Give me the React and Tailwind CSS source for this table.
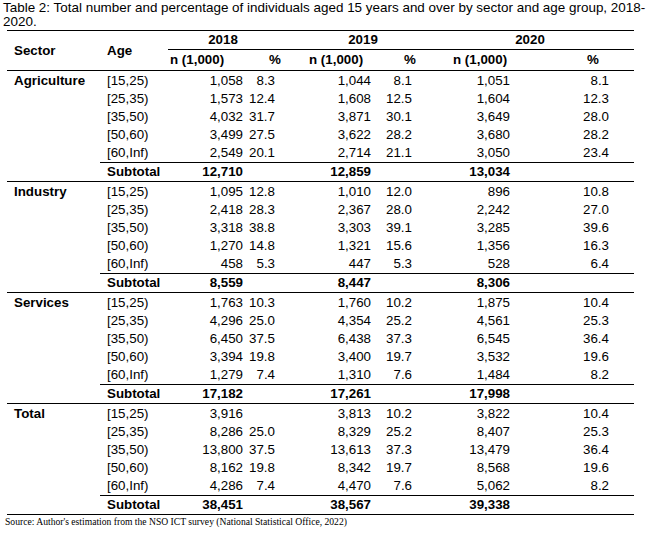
import React from "react";

const sections = [
  {
    name: "Agriculture",
    rows: [
      ["[15,25)", "1,058", "8.3", "1,044", "8.1", "1,051", "8.1"],
      ["[25,35)", "1,573", "12.4", "1,608", "12.5", "1,604", "12.3"],
      ["[35,50)", "4,032", "31.7", "3,871", "30.1", "3,649", "28.0"],
      ["[50,60)", "3,499", "27.5", "3,622", "28.2", "3,680", "28.2"],
      ["[60,Inf)", "2,549", "20.1", "2,714", "21.1", "3,050", "23.4"],
    ],
    sub: ["12,710", "12,859", "13,034"],
  },
  {
    name: "Industry",
    rows: [
      ["[15,25)", "1,095", "12.8", "1,010", "12.0", "896", "10.8"],
      ["[25,35)", "2,418", "28.3", "2,367", "28.0", "2,242", "27.0"],
      ["[35,50)", "3,318", "38.8", "3,303", "39.1", "3,285", "39.6"],
      ["[50,60)", "1,270", "14.8", "1,321", "15.6", "1,356", "16.3"],
      ["[60,Inf)", "458", "5.3", "447", "5.3", "528", "6.4"],
    ],
    sub: ["8,559", "8,447", "8,306"],
  },
  {
    name: "Services",
    rows: [
      ["[15,25)", "1,763", "10.3", "1,760", "10.2", "1,875", "10.4"],
      ["[25,35)", "4,296", "25.0", "4,354", "25.2", "4,561", "25.3"],
      ["[35,50)", "6,450", "37.5", "6,438", "37.3", "6,545", "36.4"],
      ["[50,60)", "3,394", "19.8", "3,400", "19.7", "3,532", "19.6"],
      ["[60,Inf)", "1,279", "7.4", "1,310", "7.6", "1,484", "8.2"],
    ],
    sub: ["17,182", "17,261", "17,998"],
  },
  {
    name: "Total",
    rows: [
      ["[15,25)", "3,916", "", "3,813", "10.2", "3,822", "10.4"],
      ["[25,35)", "8,286", "25.0", "8,329", "25.2", "8,407", "25.3"],
      ["[35,50)", "13,800", "37.5", "13,613", "37.3", "13,479", "36.4"],
      ["[50,60)", "8,162", "19.8", "8,342", "19.7", "8,568", "19.6"],
      ["[60,Inf)", "4,286", "7.4", "4,470", "7.6", "5,062", "8.2"],
    ],
    sub: ["38,451", "38,567", "39,338"],
  },
];

const numPad = ["pr-[5px]", "pr-[7px]", "pr-[5px]", "pr-[6px]", "pr-[6px]", "pr-[25px]"];

function Section({ s }) {
  return (
    <>
      {s.rows.map((r, i) => {
        const first = i === 0;
        const h = first ? "h-[19px] pt-[1px]" : "h-[18px]";
        return (
          <tr key={i}>
            {first && (
              <td rowSpan={5} className="align-top pl-[7px] pt-[1px] font-bold leading-[18px]">
                {s.name}
              </td>
            )}
            <td className={`${h} pl-[7px] leading-[18px] p-0`}>{r[0]}</td>
            {r.slice(1).map((v, j) => (
              <td key={j} className={`${h} text-right leading-[18px] ${numPad[j]}`}>
                {v}
              </td>
            ))}
          </tr>
        );
      })}
      <tr className="border-b border-black">
        <td></td>
        <td className="h-[19px] pl-[7px] font-bold border-t border-black leading-[18px]">Subtotal</td>
        <td className={`text-right font-bold border-t border-black leading-[18px] ${numPad[0]}`}>{s.sub[0]}</td>
        <td className="border-t border-black"></td>
        <td className={`text-right font-bold border-t border-black leading-[18px] ${numPad[2]}`}>{s.sub[1]}</td>
        <td className="border-t border-black"></td>
        <td className={`text-right font-bold border-t border-black leading-[18px] ${numPad[4]}`}>{s.sub[2]}</td>
        <td className="border-t border-black"></td>
      </tr>
    </>
  );
}

export default function App() {
  return (
    <div
      className="w-[651px] h-[536px] bg-white text-black overflow-hidden"
      style={{ fontFamily: '"Liberation Sans", Arial, sans-serif' }}
    >
      <p className="pl-[3px] pt-[1px] text-[13.45px] leading-[14px] whitespace-nowrap">
        Table 2: Total number and percentage of individuals aged 15 years and over by sector and age group, 2018-
        <br />
        2020.
      </p>
      <table className="ml-[7px] mt-[1px] w-[627px] table-fixed border-collapse text-[13.33px] border-t border-black">
        <colgroup>
          <col className="w-[93px]" />
          <col className="w-[68px]" />
          <col className="w-[80px]" />
          <col className="w-[34px]" />
          <col className="w-[94px]" />
          <col className="w-[42px]" />
          <col className="w-[98px]" />
          <col className="w-[118px]" />
        </colgroup>
        <thead>
          <tr>
            <th rowSpan={2} className="text-left pl-[7px] font-bold align-middle border-b border-black">
              Sector
            </th>
            <th rowSpan={2} className="text-left pl-[7px] font-bold align-middle border-b border-black">
              Age
            </th>
            <th colSpan={2} className="h-[19px] text-center font-bold border-b border-black pr-[4px] leading-[18px]">
              2018
            </th>
            <th colSpan={2} className="text-center font-bold border-b border-black pl-[26px] leading-[18px]">
              2019
            </th>
            <th colSpan={2} className="text-center font-bold border-b border-black pl-[8px] leading-[18px]">
              2020
            </th>
          </tr>
          <tr className="border-b border-black">
            <th className="h-[19px] text-left pl-[2px] font-bold leading-[18px] whitespace-nowrap">n (1,000)</th>
            <th className="text-left pl-[21px] font-bold">%</th>
            <th className="text-left pl-[27px] font-bold whitespace-nowrap">n (1,000)</th>
            <th className="text-left pl-[28px] font-bold">%</th>
            <th className="text-left pl-[35px] font-bold whitespace-nowrap">n (1,000)</th>
            <th className="text-left pl-[71px] font-bold">%</th>
          </tr>
        </thead>
        <tbody>
          {sections.map((s) => (
            <Section key={s.name} s={s} />
          ))}
        </tbody>
      </table>
      <p
        className="pl-[5px] pt-[1px] text-[9.62px] leading-[12px]"
        style={{ fontFamily: '"Liberation Serif", "Times New Roman", serif' }}
      >
        Source: Author's estimation from the NSO ICT survey (National Statistical Office, 2022)
      </p>
    </div>
  );
}
